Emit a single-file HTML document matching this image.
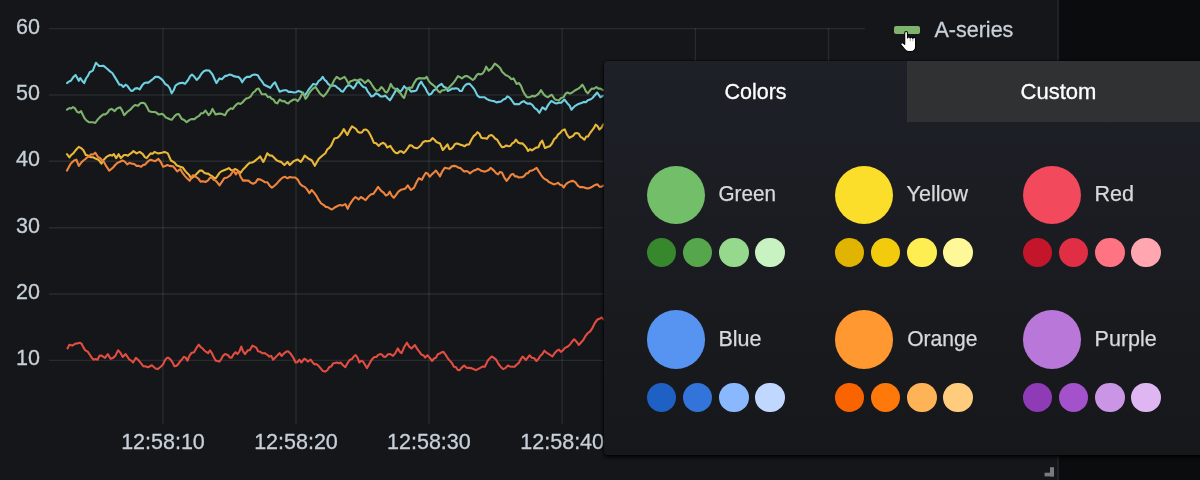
<!DOCTYPE html>
<html><head><meta charset="utf-8"><style>
html,body{margin:0;padding:0;}
body{width:1200px;height:480px;overflow:hidden;background:#0b0c0e;position:relative;font-family:"Liberation Sans",sans-serif;}
.panel{position:absolute;left:-10px;top:-10px;width:1065px;height:489px;background:#141619;border:2px solid #202226;border-radius:4px;}
svg{position:absolute;left:0;top:0;will-change:transform;}
.grid line{stroke:rgba(240,250,255,0.09);stroke-width:1.4;}
.ser path{fill:none;stroke-width:2.1;stroke-linejoin:round;stroke-linecap:round;}
.axis text{fill:#c7d0d9;stroke:#c7d0d9;stroke-width:0.3px;font-size:21.5px;font-family:"Liberation Sans",sans-serif;}
.legbar{position:absolute;left:894.4px;top:26.2px;width:25.7px;height:7.5px;border-radius:2px;background:#7EB26D;}
.pop{position:absolute;left:604px;top:60.5px;width:606px;height:394px;border-radius:4px;
  background:linear-gradient(180deg,#1e2028 0%,#161719 104.25%);
  box-shadow:0 2px 4px #000,0 0 2px #000;overflow:hidden;}
.tab2{position:absolute;left:303px;top:0;width:303px;height:61.5px;background:#303133;}
.big{position:absolute;width:58.5px;height:58.5px;border-radius:50%;}
.sm{position:absolute;width:29.4px;height:29.4px;border-radius:50%;}
.poptext text{font-size:21.5px;font-family:"Liberation Sans",sans-serif;}
</style></head><body>
<div class="panel"></div>
<svg width="1200" height="480" viewBox="0 0 1200 480">
 <g class="grid"><line x1="49" y1="28.6" x2="865" y2="28.6"/><line x1="49" y1="94.95" x2="865" y2="94.95"/><line x1="49" y1="161.3" x2="865" y2="161.3"/><line x1="49" y1="227.7" x2="865" y2="227.7"/><line x1="49" y1="294.0" x2="865" y2="294.0"/><line x1="49" y1="360.4" x2="865" y2="360.4"/><line x1="163.0" y1="28" x2="163.0" y2="424.5"/><line x1="296.0" y1="28" x2="296.0" y2="424.5"/><line x1="428.9" y1="28" x2="428.9" y2="424.5"/><line x1="562.2" y1="28" x2="562.2" y2="424.5"/><line x1="695.4" y1="28" x2="695.4" y2="424.5"/><line x1="828.5" y1="28" x2="828.5" y2="424.5"/></g>
 <g class="ser">
  <path stroke="#6ED0E0" d="M67.0,83.1 L69.0,81.5 L70.9,80.8 L73.3,77.1 L75.6,75.0 L78.8,80.8 L80.3,78.1 L82.3,81.0 L84.2,83.1 L86.0,78.5 L87.9,75.9 L89.7,72.2 L92.8,70.6 L95.9,62.8 L99.1,65.9 L101.1,66.0 L103.2,65.7 L105.3,67.2 L107.7,69.3 L110.0,71.4 L112.3,73.0 L114.7,76.9 L117.0,80.6 L119.4,84.7 L121.3,84.8 L123.3,87.0 L125.6,84.7 L127.4,85.8 L129.3,88.7 L131.1,90.9 L133.0,90.6 L135.0,88.6 L137.3,88.1 L139.7,89.4 L142.0,85.6 L144.4,83.1 L146.5,82.6 L148.5,82.6 L150.6,80.8 L153.0,79.0 L155.3,76.9 L158.4,76.9 L160.8,78.6 L163.1,80.8 L165.5,84.3 L167.8,85.5 L169.8,88.3 L171.7,93.3 L173.7,90.2 L175.6,85.5 L178.0,83.8 L180.3,83.1 L182.7,82.7 L185.0,83.9 L188.1,80.0 L190.1,76.3 L192.0,74.5 L194.4,76.8 L196.7,80.0 L199.1,77.6 L201.4,73.8 L203.8,71.3 L206.2,70.3 L209.4,70.6 L212.5,74.5 L214.5,79.0 L216.4,83.1 L219.5,78.4 L221.9,79.2 L225.0,76.1 L227.3,75.6 L229.7,74.5 L231.6,75.0 L233.6,76.1 L235.9,76.6 L238.3,76.9 L240.2,78.6 L242.2,82.3 L244.5,78.6 L246.9,76.9 L250.0,76.9 L252.3,75.0 L254.7,74.5 L257.8,75.3 L259.9,78.9 L262.0,81.4 L264.1,84.7 L267.2,86.2 L270.3,87.8 L272.7,84.6 L275.0,82.3 L277.3,87.2 L279.7,91.7 L282.0,90.8 L284.4,90.2 L286.5,90.2 L288.5,91.9 L290.6,91.7 L293.8,92.5 L296.1,92.2 L298.4,90.9 L300.8,91.7 L302.7,93.1 L304.7,95.6 L307.0,92.3 L309.4,88.6 L311.3,86.3 L313.3,83.9 L316.4,84.7 L318.8,80.8 L320.7,79.7 L322.7,76.9 L324.5,79.8 L326.3,81.1 L328.1,83.9 L330.5,85.8 L332.8,85.5 L335.2,85.7 L337.5,87.8 L339.3,88.9 L341.1,91.0 L343.0,91.7 L346.2,87.0 L348.2,85.4 L350.2,85.5 L353.3,88.6 L355.1,86.2 L356.9,82.8 L358.8,81.6 L361.1,84.7 L363.4,87.0 L365.8,87.8 L367.6,91.3 L369.4,93.7 L371.2,96.4 L373.6,95.7 L375.9,93.3 L378.3,94.4 L380.6,96.4 L383.0,96.5 L385.3,95.6 L387.7,98.2 L390.0,100.3 L392.3,96.6 L394.7,92.4 L397.0,88.6 L400.2,91.7 L402.1,89.8 L404.1,86.2 L406.4,88.5 L408.8,88.6 L411.1,91.7 L412.9,91.1 L414.7,91.1 L416.6,90.2 L418.9,84.8 L421.2,81.6 L423.2,85.2 L425.2,87.8 L427.1,91.7 L429.1,94.8 L431.4,93.7 L433.8,90.2 L435.7,89.4 L437.7,86.5 L439.6,85.2 L441.6,83.9 L443.6,86.7 L445.7,87.4 L447.8,90.9 L449.9,90.1 L452.0,88.6 L454.1,88.6 L456.0,88.3 L458.0,88.7 L459.9,91.0 L461.9,90.9 L463.8,86.9 L465.8,84.7 L467.7,83.7 L469.7,83.9 L472.0,86.4 L474.4,89.4 L477.5,95.6 L479.8,97.3 L482.2,97.2 L484.6,97.2 L487.0,99.1 L489.4,100.3 L491.7,100.8 L494.1,101.1 L496.4,102.4 L498.8,101.9 L501.1,101.5 L503.4,99.5 L505.4,98.8 L507.3,96.4 L509.3,97.4 L511.2,99.5 L514.4,104.2 L516.7,104.0 L519.1,104.2 L521.4,102.3 L523.8,101.1 L525.8,102.8 L527.9,103.8 L530.0,103.4 L532.3,104.9 L534.7,108.1 L537.0,109.7 L539.4,112.8 L542.5,107.3 L545.6,109.7 L547.4,106.2 L549.3,103.3 L551.1,101.1 L552.9,101.8 L554.7,102.9 L556.6,103.4 L558.9,102.5 L561.2,102.7 L564.4,99.5 L567.5,103.4 L569.5,105.4 L571.4,109.7 L573.4,107.5 L575.3,105.8 L577.7,104.3 L580.0,103.4 L582.0,102.8 L583.9,101.9 L585.9,102.2 L587.8,100.3 L590.2,99.6 L592.5,98.0 L594.8,95.3 L597.2,92.5 L600.3,97.2 L603.4,95.6 L605.8,95.1 L608.1,94.1"/>
  <path stroke="#7EB26D" d="M67.0,109.7 L69.4,108.1 L71.2,108.5 L73.0,107.1 L74.8,108.1 L77.2,112.0 L79.1,112.6 L81.1,111.2 L82.9,115.0 L84.7,118.4 L86.6,120.6 L88.9,122.1 L91.2,122.2 L93.2,122.3 L95.2,123.0 L97.5,119.8 L99.5,117.6 L101.4,115.9 L103.4,114.2 L105.3,114.4 L107.4,112.9 L109.5,109.7 L111.6,108.9 L114.7,111.2 L116.5,108.9 L118.3,107.9 L120.2,107.3 L122.1,110.4 L124.1,115.2 L127.2,112.0 L130.3,109.7 L132.7,107.0 L135.0,105.0 L138.1,105.8 L140.5,103.1 L142.8,102.7 L144.8,103.4 L146.7,106.6 L149.1,111.2 L152.2,112.0 L154.3,112.0 L156.4,112.6 L158.4,114.4 L160.3,114.3 L162.1,113.8 L163.9,115.2 L165.9,117.6 L167.8,118.3 L169.8,119.3 L171.7,119.8 L174.8,115.9 L176.8,114.2 L178.8,114.1 L181.9,119.1 L184.2,120.0 L186.6,122.2 L189.7,119.8 L192.0,119.1 L194.4,119.1 L196.7,117.2 L199.1,115.9 L201.2,113.2 L203.3,113.1 L205.5,110.5 L208.6,115.2 L210.5,113.2 L212.5,108.9 L215.6,114.4 L218.0,113.9 L220.3,113.6 L222.7,114.3 L225.0,115.2 L227.0,111.4 L228.9,109.7 L230.9,108.3 L232.8,108.9 L234.8,106.2 L236.7,104.2 L238.5,103.1 L240.4,104.0 L242.2,102.7 L244.3,100.3 L246.4,98.4 L248.4,98.0 L250.8,96.3 L253.1,92.5 L254.9,91.3 L256.8,89.0 L258.6,88.6 L261.7,94.1 L263.7,94.2 L265.6,94.1 L268.0,97.2 L269.8,96.8 L271.6,98.8 L273.4,99.5 L275.4,102.6 L277.3,103.4 L279.7,99.5 L282.0,101.2 L284.4,101.1 L286.3,102.7 L288.3,103.4 L290.1,101.6 L291.9,100.5 L293.8,99.5 L295.7,99.5 L297.7,101.1 L299.5,98.9 L301.3,95.4 L303.1,92.5 L305.5,98.8 L307.3,96.8 L309.1,93.1 L310.9,90.9 L313.3,88.3 L315.6,87.0 L317.6,90.1 L319.5,92.9 L321.5,94.9 L323.4,96.4 L325.5,94.3 L327.6,91.4 L329.7,87.8 L332.0,84.7 L334.4,79.9 L336.7,76.9 L339.8,79.2 L342.2,78.1 L344.5,76.9 L346.6,80.0 L348.6,83.9 L350.5,81.2 L352.5,80.8 L354.8,79.6 L357.2,80.8 L360.3,79.2 L362.7,80.6 L365.0,83.1 L368.1,80.0 L370.5,82.5 L372.8,86.2 L374.8,89.1 L376.7,90.9 L379.1,90.1 L381.4,87.0 L383.2,88.7 L385.1,91.7 L386.9,92.5 L388.8,89.4 L390.8,83.9 L392.7,87.3 L394.7,88.6 L396.6,89.8 L398.6,91.7 L400.5,93.4 L402.5,96.4 L404.1,98.0 L407.2,88.6 L409.5,87.5 L411.9,87.8 L414.2,82.8 L416.6,79.2 L418.9,78.1 L421.2,78.4 L423.1,78.2 L424.9,78.4 L426.7,76.9 L428.7,80.8 L430.6,83.1 L432.6,84.6 L434.5,86.2 L436.4,88.7 L438.2,91.1 L440.0,92.5 L442.1,90.2 L444.2,90.3 L446.2,88.6 L448.6,88.0 L450.9,85.5 L453.3,83.0 L455.6,79.8 L458.0,76.1 L459.9,77.2 L461.9,78.4 L465.0,76.1 L467.3,76.1 L469.7,77.7 L472.8,80.0 L474.6,78.6 L476.5,75.4 L478.3,73.8 L480.2,74.5 L482.2,73.8 L484.2,71.4 L486.2,66.7 L488.6,70.6 L491.7,68.3 L494.8,63.6 L496.7,64.9 L498.5,66.5 L500.3,68.3 L502.1,71.7 L504.0,73.5 L505.8,75.3 L507.6,75.8 L509.4,77.0 L511.2,79.2 L513.6,78.4 L516.7,83.9 L519.1,83.1 L521.0,85.8 L523.0,91.1 L524.9,94.4 L526.9,97.2 L530.0,97.2 L532.3,95.9 L534.7,96.4 L536.8,95.1 L538.9,93.4 L540.9,90.2 L544.1,94.8 L546.0,96.4 L548.0,97.2 L549.9,95.7 L551.9,94.8 L555.0,99.5 L557.0,100.0 L558.9,100.3 L561.2,97.9 L563.6,97.2 L565.5,93.7 L567.5,92.5 L569.8,93.6 L572.2,92.5 L575.3,90.2 L578.4,88.6 L580.4,87.0 L582.3,84.7 L584.2,87.6 L586.0,91.5 L587.8,93.3 L589.8,90.8 L591.7,88.6 L594.1,88.7 L596.4,87.0 L598.4,88.6 L600.3,88.6 L603.4,90.2 L605.8,89.9 L608.1,90.9"/>
  <path stroke="#EAB839" d="M67.0,154.2 L69.4,157.3 L71.3,154.8 L73.3,153.4 L75.6,150.3 L78.8,146.9 L81.1,148.1 L83.4,150.3 L85.8,155.0 L87.6,155.2 L89.4,156.8 L91.2,157.3 L93.1,157.3 L94.9,158.2 L96.7,158.9 L99.1,160.4 L101.4,163.6 L103.8,159.7 L106.9,156.6 L110.0,155.0 L112.0,155.6 L113.9,154.2 L116.2,158.1 L118.6,154.2 L120.9,158.1 L124.1,155.0 L126.0,155.0 L128.0,155.8 L129.8,154.1 L131.6,152.9 L133.4,151.1 L136.6,153.4 L139.7,151.9 L142.8,154.2 L144.8,157.1 L146.7,158.1 L148.7,155.6 L150.6,153.4 L152.6,153.7 L154.5,151.9 L157.7,153.4 L159.6,153.1 L161.6,152.7 L164.7,151.9 L167.8,153.4 L170.9,160.5 L172.9,161.7 L174.8,162.8 L176.4,165.2 L178.4,166.0 L180.3,166.7 L182.7,167.5 L185.0,170.6 L187.1,173.1 L189.2,175.1 L191.2,178.4 L194.4,176.1 L197.5,173.0 L199.8,170.6 L202.2,170.6 L204.2,172.8 L206.2,173.6 L208.2,173.6 L210.2,175.2 L212.0,176.1 L213.8,177.8 L215.6,178.3 L217.6,175.7 L219.5,172.8 L221.5,171.2 L223.4,170.5 L225.3,169.7 L227.1,169.0 L228.9,168.1 L230.9,170.0 L232.8,170.5 L234.8,169.1 L236.7,169.7 L238.7,171.4 L240.6,172.8 L243.0,169.5 L245.3,167.3 L247.7,164.5 L250.0,162.7 L252.3,162.5 L254.7,161.1 L256.5,159.5 L258.3,158.1 L260.2,156.4 L263.3,161.9 L265.2,158.2 L267.2,153.3 L269.5,155.4 L271.9,155.6 L274.2,157.8 L276.6,160.3 L278.9,161.4 L281.2,161.9 L284.4,165.0 L287.5,161.9 L289.8,165.0 L291.8,163.1 L293.8,161.1 L295.7,160.3 L297.7,159.5 L300.8,161.9 L302.7,159.2 L304.7,155.6 L306.6,157.1 L308.6,158.8 L311.7,160.3 L314.8,165.8 L316.8,162.3 L318.8,158.8 L321.1,156.7 L323.4,154.8 L325.4,153.2 L327.3,149.4 L329.3,147.9 L331.2,145.5 L334.4,138.4 L337.5,137.7 L339.6,135.7 L341.7,133.0 L343.8,129.1 L347.3,135.0 L349.7,130.1 L352.0,126.4 L354.0,127.7 L355.9,128.8 L357.9,131.8 L359.8,132.7 L361.9,132.4 L364.0,129.7 L366.1,129.5 L368.0,131.0 L370.0,134.2 L372.0,138.4 L373.9,142.8 L376.2,143.3 L378.6,145.9 L380.9,143.8 L383.3,142.8 L385.2,144.1 L387.2,147.5 L390.3,145.9 L392.1,148.7 L394.0,151.3 L395.8,153.0 L397.7,153.1 L399.7,151.4 L401.6,151.4 L403.6,153.0 L405.7,150.9 L407.8,148.1 L409.8,145.2 L411.8,145.5 L413.8,147.5 L416.9,148.3 L419.0,147.1 L421.0,145.2 L423.1,142.0 L425.5,141.0 L427.8,141.2 L430.2,140.8 L432.5,138.1 L434.5,139.8 L436.4,142.0 L440.0,143.4 L442.8,150.0 L445.2,147.2 L447.5,144.4 L449.4,149.1 L451.3,148.8 L453.1,147.0 L455.0,144.0 L456.9,143.4 L458.8,144.0 L460.6,144.9 L462.5,145.2 L464.4,146.3 L466.7,144.6 L469.1,144.4 L471.4,139.7 L473.8,135.9 L475.6,134.6 L477.5,132.2 L479.4,133.8 L481.3,137.8 L483.1,138.3 L485.0,138.3 L486.9,138.8 L489.2,135.7 L491.6,135.0 L493.4,136.5 L495.3,138.8 L497.2,139.7 L499.5,143.7 L501.9,147.2 L504.1,146.9 L506.3,145.5 L508.4,146.3 L510.3,146.0 L512.2,143.4 L514.1,142.3 L515.9,139.7 L518.3,142.7 L520.6,143.4 L522.5,143.4 L524.4,145.3 L526.3,147.6 L528.1,150.9 L530.0,149.2 L531.9,150.4 L533.8,149.1 L536.1,147.6 L538.4,147.2 L540.3,143.0 L542.2,140.6 L545.0,148.1 L547.3,147.0 L549.7,146.3 L552.0,143.5 L554.4,138.8 L556.3,137.6 L558.1,134.4 L560.0,133.1 L562.3,130.4 L564.7,129.4 L567.0,134.6 L569.4,137.8 L571.3,136.8 L573.1,135.9 L575.0,133.3 L576.9,133.1 L578.8,133.7 L580.6,136.9 L582.5,137.9 L584.4,139.7 L586.3,136.5 L588.1,136.4 L590.0,133.1 L591.9,130.6 L593.8,128.2 L595.6,124.7 L597.5,126.0 L599.4,129.4 L601.3,127.9 L603.1,124.7 L605.0,123.3 L606.9,124.9 L608.8,123.8"/>
  <path stroke="#EF843C" d="M67.0,170.6 L70.2,164.4 L72.1,162.3 L74.1,160.5 L76.4,159.7 L78.8,165.9 L81.1,162.8 L83.4,160.5 L85.4,159.0 L87.3,157.3 L89.7,155.8 L91.2,154.2 L93.2,154.5 L95.2,152.7 L98.3,157.3 L100.2,158.3 L102.2,160.5 L104.1,162.3 L106.1,165.9 L109.2,170.6 L111.2,169.1 L113.1,167.5 L115.2,165.0 L117.3,162.9 L119.4,162.0 L122.5,160.5 L124.8,161.6 L127.2,164.4 L129.5,162.9 L131.9,163.6 L134.2,164.0 L136.6,165.9 L138.9,165.9 L141.2,166.7 L143.1,164.9 L144.9,164.7 L146.7,162.8 L148.7,160.7 L150.6,159.7 L153.0,160.5 L155.3,161.2 L158.4,158.9 L160.8,162.0 L163.1,166.7 L165.2,166.1 L167.3,165.0 L169.4,165.9 L171.2,166.1 L173.0,166.3 L174.8,168.3 L177.2,171.4 L180.3,169.1 L182.7,173.1 L185.0,176.1 L187.3,178.6 L189.7,180.8 L192.8,175.3 L195.9,176.9 L198.3,178.5 L200.6,181.6 L203.0,181.2 L205.4,182.0 L207.8,180.6 L209.8,178.1 L211.7,177.5 L213.7,179.8 L215.6,180.6 L217.6,182.8 L219.5,185.3 L221.9,181.8 L224.2,178.3 L227.3,177.5 L230.5,175.2 L233.6,170.5 L235.9,174.4 L238.3,171.2 L240.6,176.7 L243.0,180.6 L244.8,180.4 L246.6,180.6 L248.4,180.6 L250.8,182.6 L253.1,183.8 L255.5,182.6 L257.8,179.1 L260.2,179.5 L262.5,180.6 L264.8,182.2 L267.2,182.2 L269.5,185.4 L271.9,187.7 L274.2,186.0 L276.6,183.8 L278.6,181.4 L280.7,179.2 L282.8,177.5 L285.2,176.8 L287.5,178.3 L289.8,177.0 L292.2,177.5 L295.3,177.5 L297.7,179.6 L300.0,183.8 L302.3,185.9 L304.7,186.9 L307.0,189.4 L309.4,193.1 L311.7,190.0 L314.1,192.6 L316.4,195.8 L318.8,200.2 L321.1,203.3 L323.4,204.8 L325.8,206.9 L328.1,207.2 L330.1,208.8 L332.0,209.5 L335.2,207.2 L338.3,205.6 L340.2,205.1 L342.2,205.6 L345.3,204.1 L347.7,208.8 L349.6,204.6 L351.6,201.7 L353.5,198.9 L355.5,197.0 L358.6,199.4 L360.9,197.0 L363.3,198.5 L365.6,200.2 L368.8,196.2 L371.1,194.3 L373.4,193.9 L375.8,190.3 L378.1,186.9 L381.2,190.8 L383.6,192.6 L385.9,195.5 L387.9,194.6 L389.8,191.6 L391.8,195.8 L393.8,197.8 L396.1,194.8 L398.4,191.6 L400.8,189.8 L403.1,189.2 L405.5,188.4 L407.8,185.3 L410.9,190.0 L414.1,187.7 L416.4,182.5 L418.8,178.3 L421.9,179.8 L423.8,176.0 L425.8,172.8 L427.7,173.6 L429.7,176.7 L431.8,174.4 L433.9,172.5 L435.9,170.5 L438.0,173.4 L440.0,176.3 L442.3,171.3 L444.7,167.8 L447.0,168.3 L449.4,168.8 L451.7,166.2 L454.1,165.9 L456.4,166.3 L458.8,167.8 L460.6,168.1 L462.5,170.1 L464.4,171.6 L466.3,171.1 L468.1,171.7 L470.0,173.4 L471.9,171.8 L473.8,170.5 L475.6,170.1 L477.5,168.8 L479.4,169.5 L481.3,170.8 L483.1,171.2 L485.0,171.6 L486.9,170.8 L488.8,170.0 L490.6,167.8 L492.5,169.4 L494.4,171.1 L496.3,173.4 L498.1,174.3 L500.0,172.0 L501.9,172.5 L504.2,177.3 L506.6,180.9 L508.9,178.0 L511.3,174.4 L513.1,173.9 L515.0,176.4 L516.9,176.3 L518.8,177.5 L520.6,177.2 L522.5,177.2 L524.4,175.9 L526.3,173.4 L528.1,173.2 L530.0,170.7 L531.9,170.6 L534.2,169.3 L536.6,167.8 L538.9,171.6 L541.3,175.3 L543.1,177.7 L545.0,179.2 L546.9,180.0 L548.8,182.0 L550.6,182.7 L552.5,183.8 L554.4,184.4 L556.3,183.6 L558.1,182.8 L560.0,184.8 L561.9,185.3 L563.8,187.5 L565.6,184.5 L567.5,182.9 L569.4,181.9 L571.3,181.1 L573.1,180.9 L575.5,182.3 L577.8,185.6 L580.0,187.1 L582.2,187.0 L584.4,187.5 L586.3,188.3 L588.1,188.4 L590.0,187.8 L591.9,187.0 L593.8,185.6 L595.6,184.7 L597.5,184.4 L599.4,186.6 L601.3,186.8 L603.1,185.6 L605.0,185.9 L606.9,185.0 L608.8,184.7"/>
  <path stroke="#E24D42" d="M67.5,348.4 L69.4,344.7 L72.2,345.6 L75.0,343.8 L77.3,343.4 L79.7,342.8 L81.6,343.8 L83.4,347.4 L85.3,350.3 L87.7,351.6 L90.0,355.0 L91.9,357.9 L93.8,359.7 L95.6,359.1 L97.5,359.7 L99.4,355.9 L101.3,355.5 L103.1,356.6 L105.0,357.8 L107.8,354.1 L110.6,358.8 L113.0,357.9 L115.3,355.9 L118.1,350.3 L120.5,352.9 L122.8,356.9 L125.6,354.1 L127.5,356.8 L129.4,359.6 L131.3,360.6 L133.1,362.5 L135.9,357.8 L138.8,360.6 L141.1,363.4 L143.4,366.3 L145.8,366.4 L148.1,367.2 L150.0,366.2 L151.9,365.3 L153.8,367.0 L155.6,368.5 L157.5,369.1 L159.4,367.8 L161.3,366.3 L163.1,364.4 L165.0,360.1 L166.9,357.8 L168.8,357.9 L170.6,359.7 L172.5,362.4 L174.4,366.3 L176.3,365.9 L178.1,364.4 L180.0,361.4 L181.9,359.5 L183.8,356.9 L185.6,357.6 L187.5,360.6 L189.4,355.8 L191.3,353.1 L194.1,352.2 L196.4,347.9 L198.8,344.7 L200.6,347.0 L202.5,348.4 L204.4,350.5 L206.3,352.0 L208.1,353.1 L210.0,350.3 L211.9,353.2 L213.8,357.2 L215.6,360.6 L217.5,361.0 L219.4,361.6 L221.3,359.0 L223.1,355.6 L225.0,354.1 L227.8,355.0 L229.7,357.4 L231.6,357.8 L233.6,354.3 L235.6,352.2 L237.5,354.1 L239.4,351.5 L241.3,346.6 L243.1,351.4 L245.0,354.1 L247.8,350.3 L249.7,350.3 L252.5,345.6 L254.4,346.6 L256.3,347.7 L258.1,351.3 L260.3,351.8 L262.5,353.3 L264.7,353.1 L267.5,355.0 L269.4,356.6 L271.3,355.9 L273.1,359.7 L275.9,356.9 L277.8,354.9 L279.7,353.1 L281.6,355.9 L284.4,353.1 L286.3,351.6 L288.1,351.3 L290.9,354.1 L293.3,357.6 L295.6,362.5 L297.5,362.2 L299.4,359.7 L301.3,362.5 L304.1,358.8 L305.9,359.5 L307.8,361.6 L310.6,359.7 L312.5,362.2 L314.4,364.4 L316.3,364.0 L318.1,365.3 L320.5,368.2 L322.8,370.9 L325.2,371.6 L327.5,370.0 L329.4,366.9 L331.3,366.4 L333.1,363.4 L335.0,363.0 L336.9,362.5 L338.8,363.4 L340.6,362.5 L343.0,365.3 L345.3,367.2 L347.7,362.8 L350.0,359.7 L351.9,359.1 L353.8,356.5 L355.6,355.0 L357.5,357.6 L359.4,362.5 L361.3,360.8 L363.1,361.6 L365.0,364.8 L366.9,368.1 L368.8,364.9 L370.6,361.4 L372.5,358.8 L374.4,357.0 L376.3,356.9 L378.1,355.1 L380.0,354.1 L381.9,354.6 L383.8,356.8 L385.6,356.9 L388.0,354.3 L390.3,354.1 L393.1,355.9 L395.5,352.8 L397.8,348.4 L399.7,351.6 L401.6,353.1 L404.2,347.0 L406.9,342.7 L409.2,346.6 L411.5,348.4 L414.9,345.0 L417.2,348.9 L419.5,351.9 L421.4,354.7 L423.3,355.2 L425.2,357.6 L427.5,355.3 L429.8,357.9 L432.1,361.0 L434.0,358.5 L435.9,357.7 L437.8,354.2 L439.7,353.6 L441.6,352.3 L443.5,351.9 L445.8,355.1 L448.1,358.8 L450.0,360.9 L451.9,363.0 L453.9,366.8 L455.8,367.0 L457.7,369.9 L459.6,370.2 L461.9,367.4 L464.2,365.6 L466.5,367.8 L468.8,367.9 L471.0,368.1 L473.3,368.9 L475.6,370.2 L477.9,369.1 L480.2,367.9 L482.5,366.6 L484.8,366.8 L488.2,359.9 L491.7,356.5 L494.0,357.9 L496.3,359.9 L498.5,364.0 L500.8,366.9 L503.1,369.1 L505.4,368.1 L507.7,365.6 L510.0,366.5 L512.3,366.8 L514.6,366.6 L516.9,364.5 L518.8,362.9 L520.7,359.3 L522.6,356.5 L526.0,359.9 L529.5,355.3 L531.8,357.7 L534.1,358.1 L536.4,361.0 L538.4,359.0 L540.4,355.8 L542.4,353.9 L544.4,350.7 L546.7,352.8 L549.0,354.2 L552.4,356.5 L554.7,353.1 L557.0,350.7 L558.9,349.6 L560.8,351.8 L562.7,350.7 L565.0,347.9 L567.3,346.8 L569.6,345.0 L571.9,341.8 L574.2,339.3 L576.5,341.7 L578.8,345.0 L581.0,342.5 L583.3,340.0 L585.6,335.8 L587.9,333.0 L590.2,331.3 L592.5,327.8 L594.8,323.1 L597.1,319.8 L599.4,318.8 L601.7,317.5 L604.0,319.8 L606.3,319.9 L608.5,319.8 L610.8,320.9"/>
 </g>
 <g class="axis"><text x="16" y="33.5">60</text><text x="16" y="99.9">50</text><text x="16" y="166.2">40</text><text x="16" y="232.6">30</text><text x="16" y="298.9">20</text><text x="16" y="365.3">10</text><text x="163.0" y="448.8" text-anchor="middle">12:58:10</text><text x="296.0" y="448.8" text-anchor="middle">12:58:20</text><text x="428.9" y="448.8" text-anchor="middle">12:58:30</text><text x="562.2" y="448.8" text-anchor="middle">12:58:40</text>
  <text x="934.5" y="37.2">A-series</text>
 </g>
 <g fill="#7b7b7b">
  <rect x="1050" y="467.2" width="4" height="9.2"/>
  <rect x="1044.6" y="472.7" width="9.4" height="3.7"/>
 </g>
</svg>
<div class="legbar"></div>
<svg width="30" height="30" viewBox="0 0 30 30" style="left:896px;top:26px">
 <path d="M8.7 18.3 L8.7 6.9 Q8.7 5.5 10.1 5.5 Q11.5 5.5 11.5 6.9 L11.5 12.0 Q11.7 11.0 12.9 11.0 Q14.1 11.0 14.2 12.2 Q14.4 11.1 15.6 11.1 Q16.8 11.1 16.9 12.4 Q17.2 11.4 18.3 11.4 Q19.6 11.4 19.6 13.0 L19.6 20.5 Q19.6 25.5 14.9 25.5 L12.4 25.5 Q10.4 25.5 8.9 23.5 L5.0 18.9 Q4.4 17.8 5.3 17.1 Q6.3 16.4 7.4 17.3 Z" fill="#fff" stroke="#000" stroke-width="1.1" stroke-linejoin="round"/>
 <path d="M14.2 12.6 L14.2 15.3 M16.9 12.8 L16.9 15.3" stroke="#666" stroke-width="0.6"/>
</svg>
<div class="pop">
 <div class="tab2"></div>
 <div class="big" style="left:42.75px;top:105.00px;background:#73BF69"></div><div class="sm" style="left:42.75px;top:177.60px;background:#37872D"></div><div class="sm" style="left:78.95px;top:177.60px;background:#56A64B"></div><div class="sm" style="left:115.15px;top:177.60px;background:#96D98D"></div><div class="sm" style="left:151.35px;top:177.60px;background:#C8F2C2"></div><div class="big" style="left:230.75px;top:105.00px;background:#FADE2A"></div><div class="sm" style="left:230.75px;top:177.60px;background:#E0B400"></div><div class="sm" style="left:266.95px;top:177.60px;background:#F2CC0C"></div><div class="sm" style="left:303.15px;top:177.60px;background:#FFEE52"></div><div class="sm" style="left:339.35px;top:177.60px;background:#FFF899"></div><div class="big" style="left:418.75px;top:105.00px;background:#F2495C"></div><div class="sm" style="left:418.75px;top:177.60px;background:#C4162A"></div><div class="sm" style="left:454.95px;top:177.60px;background:#E02F44"></div><div class="sm" style="left:491.15px;top:177.60px;background:#FF7383"></div><div class="sm" style="left:527.35px;top:177.60px;background:#FFA6B0"></div><div class="big" style="left:42.75px;top:249.90px;background:#5794F2"></div><div class="sm" style="left:42.75px;top:322.50px;background:#1F60C4"></div><div class="sm" style="left:78.95px;top:322.50px;background:#3274D9"></div><div class="sm" style="left:115.15px;top:322.50px;background:#8AB8FF"></div><div class="sm" style="left:151.35px;top:322.50px;background:#C0D8FF"></div><div class="big" style="left:230.75px;top:249.90px;background:#FF9830"></div><div class="sm" style="left:230.75px;top:322.50px;background:#FA6400"></div><div class="sm" style="left:266.95px;top:322.50px;background:#FF780A"></div><div class="sm" style="left:303.15px;top:322.50px;background:#FFB357"></div><div class="sm" style="left:339.35px;top:322.50px;background:#FFCB7D"></div><div class="big" style="left:418.75px;top:249.90px;background:#B877D9"></div><div class="sm" style="left:418.75px;top:322.50px;background:#8F3BB8"></div><div class="sm" style="left:454.95px;top:322.50px;background:#A352CC"></div><div class="sm" style="left:491.15px;top:322.50px;background:#CA95E5"></div><div class="sm" style="left:527.35px;top:322.50px;background:#DEB6F2"></div>
 <svg width="606" height="394" viewBox="0 0 606 394" class="poptext">
  <text x="151.5" y="38.3" text-anchor="middle" fill="#ffffff" stroke="#ffffff" stroke-width="0.3">Colors</text>
  <text x="454.5" y="37.8" text-anchor="middle" fill="#ffffff" stroke="#ffffff" stroke-width="0.3" textLength="75.8" lengthAdjust="spacingAndGlyphs">Custom</text>
  <g fill="#d8d9da" stroke="#d8d9da" stroke-width="0.25"><text x="114.5" y="140.3" textLength="57.4" lengthAdjust="spacingAndGlyphs">Green</text><text x="302.6" y="140.3">Yellow</text><text x="490.6" y="140.3">Red</text><text x="114.5" y="284.8">Blue</text><text x="303.2" y="284.8" textLength="70.2" lengthAdjust="spacingAndGlyphs">Orange</text><text x="490.6" y="284.8">Purple</text></g>
 </svg>
</div>
</body></html>
